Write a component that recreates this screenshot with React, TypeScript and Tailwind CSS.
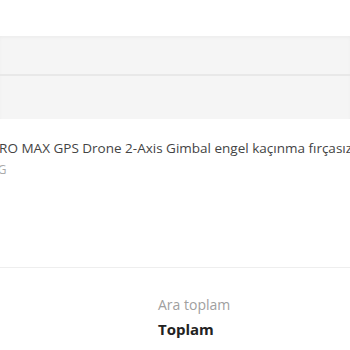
export default function App() {
  return (
    <div className="w-[350px] h-[350px] overflow-hidden bg-white font-['Open_Sans',sans-serif]">
      <div className="h-[36px] bg-white" />
      <div className="bg-[#f5f5f5] shadow-[inset_0_2px_3px_rgba(0,0,0,0.03)]">
        <div className="h-[38px]" />
        <div className="h-[2px] bg-[#e8e8e8]" />
        <div className="h-[43px]" />
      </div>
      <div className="pt-[17px] whitespace-nowrap">
        <div className="ml-[-9px] text-[13.5px] leading-[25px] text-[#444]">
          PRO MAX GPS Drone 2-Axis Gimbal engel kaçınma fırçasız motor
        </div>
        <div className="ml-[-9px] text-[12px] leading-[18px] text-[#aaa]">
          8G
        </div>
      </div>
      <div className="mt-[88px] h-px bg-[#eeeeee]" />
      <div className="pl-[158px] pt-[28px] flex flex-col gap-[8px]">
        <div className="text-[14px] leading-[17px] text-[#a0a0a0]">Ara toplam</div>
        <div className="text-[15px] leading-[17px] font-bold text-[#222]">Toplam</div>
      </div>
    </div>
  );
}
